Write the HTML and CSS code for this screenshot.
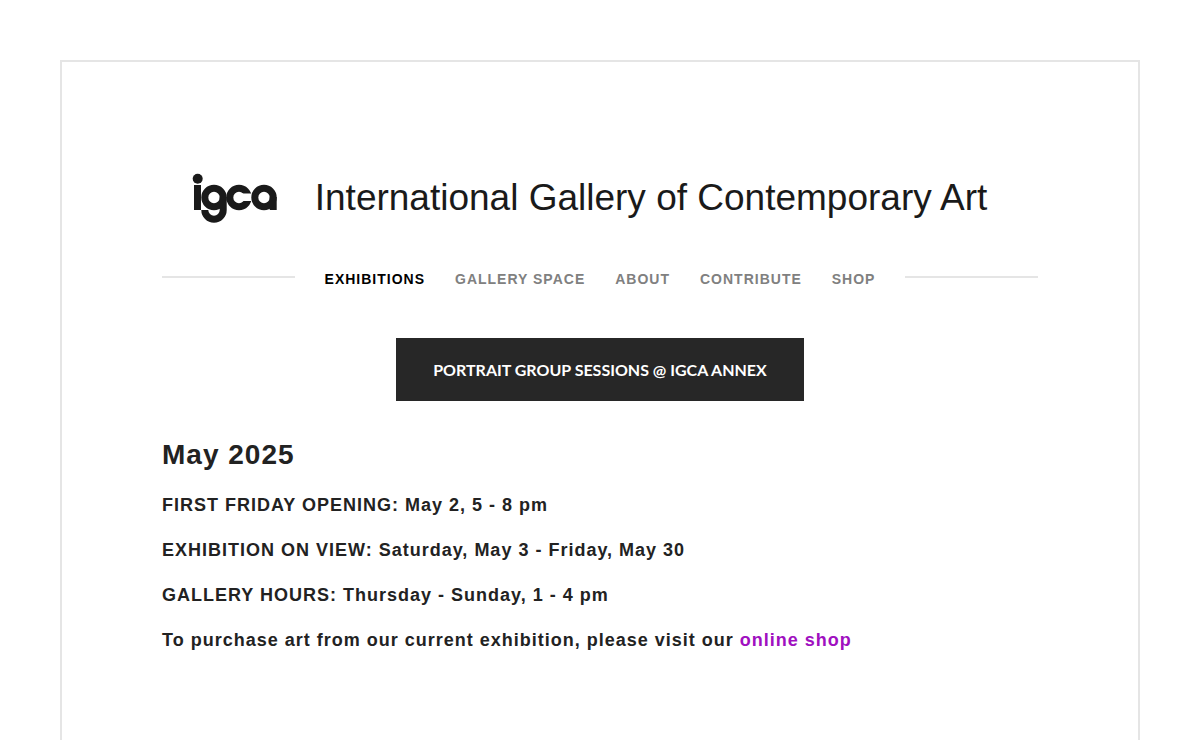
FILE: index.html
```html
<!DOCTYPE html>
<html lang="en">
<head>
    <meta charset="UTF-8">
    <meta name="viewport" content="width=device-width, initial-scale=1.0">
    <title>International Gallery of Contemporary Art</title>
    <link rel="stylesheet" href="styles.css">
</head>
<body>
    <div class="container">
        <header>
            <a class="brand" href="#">
                <svg class="logo" viewBox="0 0 86 52" role="img" aria-label="igca">
                    <circle cx="5.7" cy="6.7" r="5"/>
                    <rect x="2" y="13" width="7" height="25"/>
                    <g fill="none" stroke="#1a1a1a" stroke-width="7">
                        <circle cx="22" cy="25.5" r="9.2"/>
                        <path d="M31.2 25V38A9.2 9.2 0 0 1 12.8 38"/>
                        <circle cx="47" cy="25.5" r="9.2"/>
                        <rect class="gap" x="50" y="21.5" width="10" height="7.5"/>
                        <circle cx="72" cy="25.5" r="9.2"/>
                        <path d="M81.2 25V38"/>
                    </g>
                </svg>
                <h1>International Gallery of Contemporary Art</h1>
            </a>
        </header>

        <nav class="menu">
            <a class="active" href="#">EXHIBITIONS</a>
            <a href="#">GALLERY SPACE</a>
            <a href="#">ABOUT</a>
            <a href="#">CONTRIBUTE</a>
            <a href="#">SHOP</a>
        </nav>

        <div class="button-row">
            <a class="button" href="#">PORTRAIT GROUP SESSIONS @ IGCA ANNEX</a>
        </div>

        <!-- Current exhibition -->
        <main class="info">
            <h2>May 2025</h2>
            <p>FIRST FRIDAY OPENING: May 2, 5 - 8 pm</p>
            <p>EXHIBITION ON VIEW: Saturday, May 3 - Friday, May 30</p>
            <p>GALLERY HOURS: Thursday - Sunday, 1 - 4 pm</p>
            <p>To purchase art from our current exhibition, please visit our <a href="#">online shop</a></p>
        </main>
    </div>
</body>
</html>
```
FILE: styles.css
```css
* {
    margin: 0;
    padding: 0;
    box-sizing: border-box;
}

body {
    font-family: "Liberation Sans", Arial, sans-serif;
    background: #fff;
    color: #222;
    padding: 60px;
}

a {
    text-decoration: none;
}

.container {
    border: 2px solid #e5e5e5;
    padding: 110px 100px 100px;
}

.brand {
    display: flex;
    justify-content: center;
    align-items: center;
    gap: 37px;
    padding-right: 21px;
    color: #1a1a1a;
}

.logo {
    width: 86px;
    height: 52px;
    fill: #1a1a1a;
    flex-shrink: 0;
}

.logo .gap {
    fill: #fff;
    stroke: none;
}

h1 {
    font-size: 37px;
    font-weight: normal;
    line-height: 52px;
}

.menu {
    display: flex;
    align-items: center;
    gap: 30px;
    margin-top: 43px;
}

/* lines on both sides of the menu */
.menu::before,
.menu::after {
    content: "";
    flex: 1;
    height: 2px;
    background: #e5e5e5;
}

.menu a {
    font-size: 14px;
    font-weight: bold;
    line-height: 16px;
    letter-spacing: 1px;
    padding-top: 4px;
    color: #808080;
}

.menu .active {
    color: #000;
}

.button-row {
    text-align: center;
    margin-top: 51px;
}

.button {
    display: inline-block;
    background: #272727;
    color: #fff;
    font-family: Lato, sans-serif;
    font-size: 16px;
    font-weight: bold;
    line-height: 21px;
    padding: 21px 37px;
}

.info {
    margin-top: 35px;
    font-weight: bold;
    letter-spacing: 1px;
}

h2 {
    font-size: 28px;
    line-height: 38px;
    margin-bottom: 17px;
}

.info p {
    font-size: 18px;
    line-height: 29px;
    margin-bottom: 16px;
}

.info a {
    color: #a010c0;
}
```
